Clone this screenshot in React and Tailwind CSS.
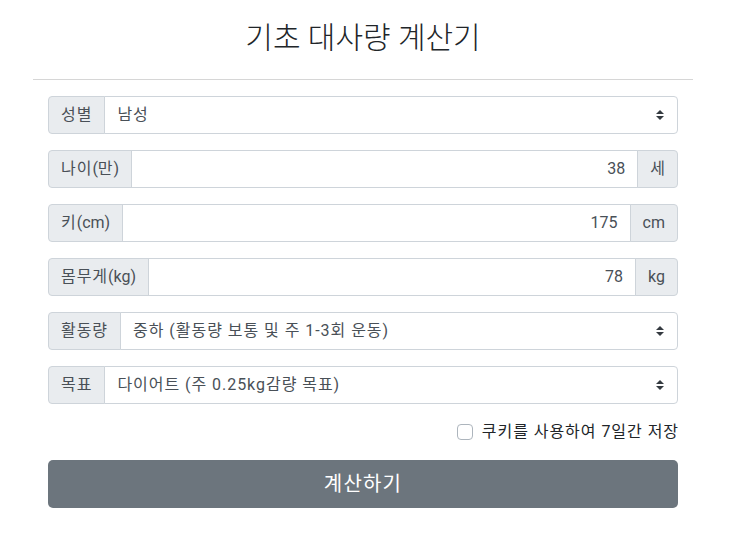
import React from "react";

const font = { fontFamily: 'Roboto, "Noto Sans CJK KR", sans-serif' };

function Arrows() {
  return (
    <svg width="8" height="10" viewBox="0 0 4 5" className="shrink-0">
      <path fill="#343a40" d="M2 0L0 2h4zm0 5L0 3h4z" />
    </svg>
  );
}

function Addon({ children, right }) {
  return (
    <div
      className={`flex h-full items-center bg-[#e9ecef] border border-[#ced4da] px-3 text-[#495057] ${
        right ? "rounded-r-[4px] -ml-px" : "rounded-l-[4px]"
      }`}
    >
      {children}
    </div>
  );
}

const K = ({ children }) => <span className="tracking-[0.06em]">{children}</span>;

function SelectRow({ label, value }) {
  return (
    <div className="flex h-[38px] items-stretch">
      <Addon>
        <K>{label}</K>
      </Addon>
      <div className="flex flex-1 items-center justify-between border border-[#ced4da] -ml-px rounded-r-[4px] pl-3 pr-[13px] text-[#495057] bg-white">
        <span className="tracking-[0.06em]">{value}</span>
        <Arrows />
      </div>
    </div>
  );
}

function NumberRow({ label, value, unit }) {
  return (
    <div className="flex h-[38px] items-stretch">
      <Addon>{label}</Addon>
      <div className="flex flex-1 items-center justify-end border border-[#ced4da] -ml-px px-3 text-[#495057] bg-white">
        <span>{value}</span>
      </div>
      <Addon right>{unit}</Addon>
    </div>
  );
}

export default function App() {
  return (
    <div className="bg-white w-[756px] h-[556px] text-[16px] leading-6" style={font}>
      <div className="ml-[33px] w-[660px] pt-[19px]">
        <h2 className="text-center text-[30px] leading-[38px] text-[#212529] font-light">
          기초 대사량 계산기
        </h2>
        <div className="mt-[22px] h-px bg-[#d6d6d6]" />
        <div className="px-[15px] pt-4 flex flex-col gap-4">
          <SelectRow label="성별" value="남성" />
          <NumberRow
            label={
              <span>
                <K>나이</K>(<K>만</K>)
              </span>
            }
            value="38"
            unit="세"
          />
          <NumberRow
            label={
              <span>
                <K>키</K>(cm)
              </span>
            }
            value="175"
            unit="cm"
          />
          <NumberRow
            label={
              <span>
                <K>몸무게</K>(kg)
              </span>
            }
            value="78"
            unit="kg"
          />
          <SelectRow label="활동량" value="중하 (활동량 보통 및 주 1-3회 운동)" />
          <SelectRow label="목표" value="다이어트 (주 0.25kg감량 목표)" />
          <div className="flex justify-end items-center h-6">
            <div className="w-4 h-4 border border-[#adb5bd] rounded-[4px] bg-white mr-[9px]" />
            <span className="text-[#212529] tracking-[0.06em] -mr-[1px]">쿠키를 사용하여 7일간 저장</span>
          </div>
          <button className="h-12 w-full rounded-[5px] bg-[#6c757d] text-white text-[20px] tracking-[0.06em]">
            계산하기
          </button>
        </div>
      </div>
    </div>
  );
}
